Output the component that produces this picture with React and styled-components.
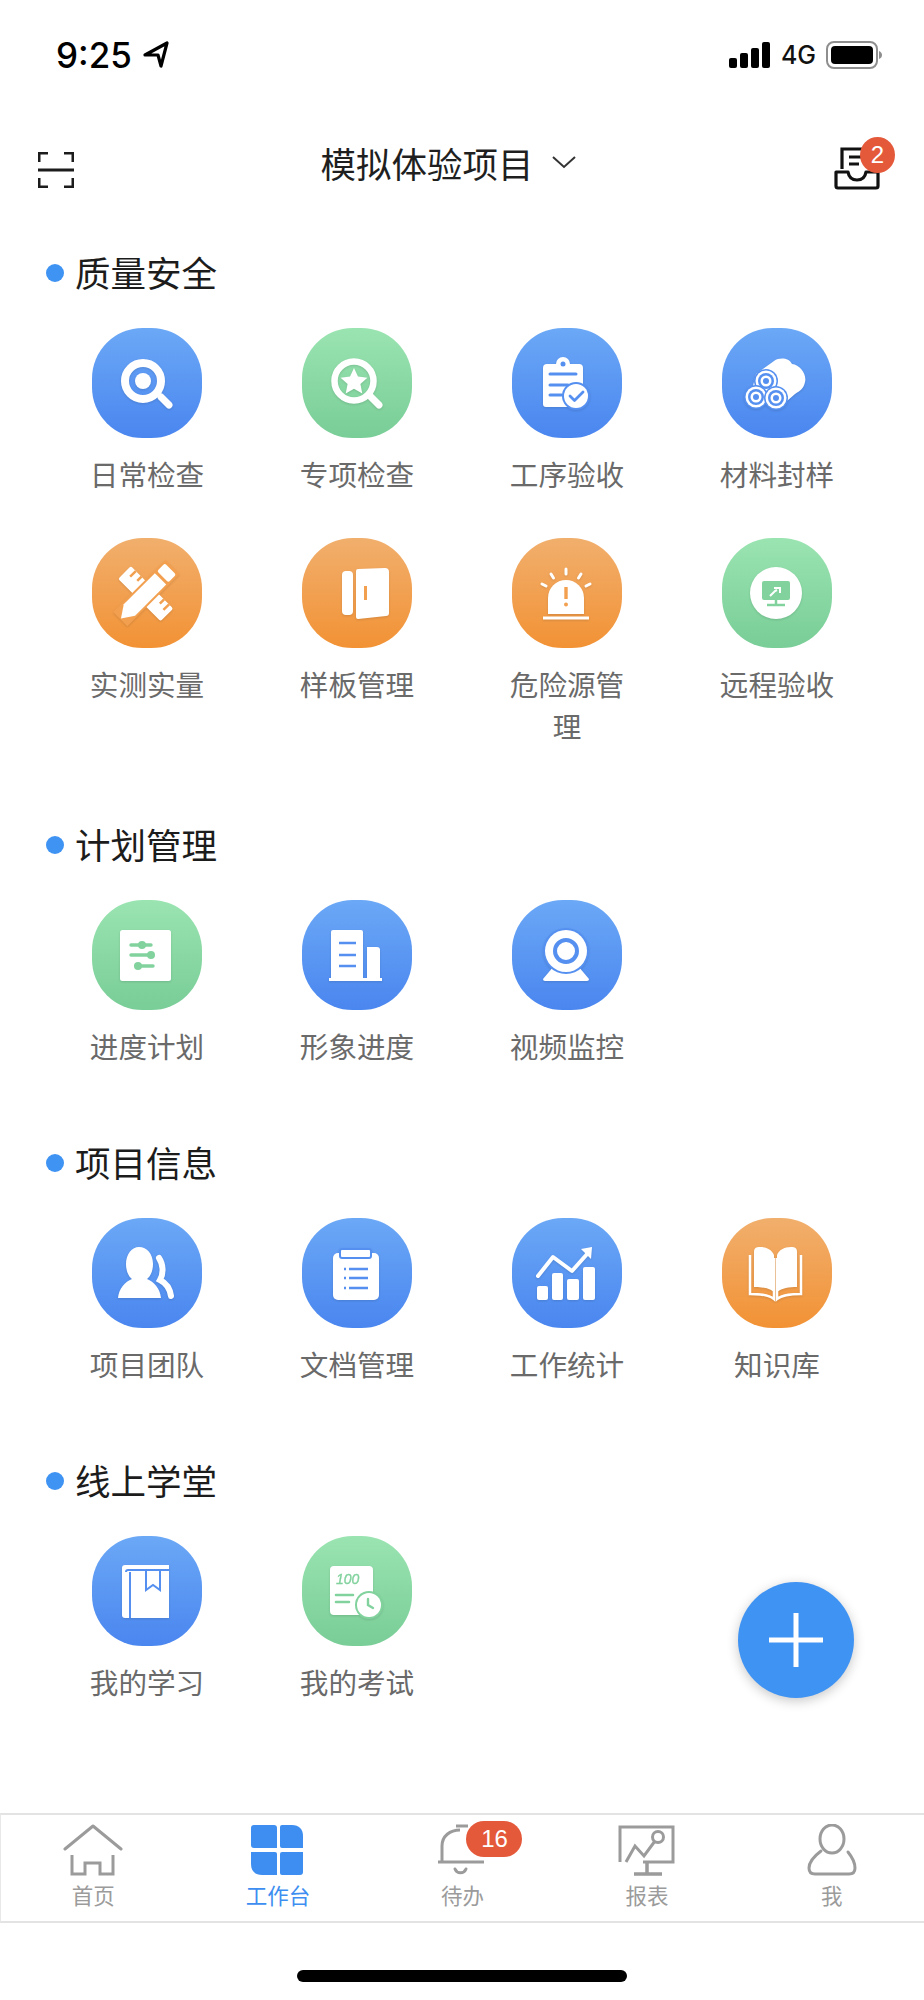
import React from "react";
import styled, { createGlobalStyle } from "styled-components";

const GlobalStyle = createGlobalStyle`
  html, body {
    margin: 0;
    padding: 0;
    background: #fff;
  }
  body {
    font-family: "Noto Sans CJK SC", "Noto Sans", sans-serif;
  }
`;

const BLUE = "#5590f0";
const GREEN = "#82d29e";
const ORANGE = "#f2a050";

const Page = styled.div`
  position: relative;
  width: 924px;
  height: 2000px;
  display: flex;
  flex-direction: column;
  overflow: hidden;
  background: #fff;
`;

const StatusBar = styled.div`
  height: 110px;
  box-sizing: border-box;
  padding: 36px 42px 0 56px;
  display: flex;
  justify-content: space-between;
  align-items: flex-start;
`;
const StatusLeft = styled.div`
  display: flex;
  align-items: center;
  gap: 11px;
  height: 38px;
`;
const StatusRight = styled.div`
  display: flex;
  align-items: center;
  gap: 10px;
  height: 38px;
`;
const Time = styled.span`
  font-family: "Inter", "Liberation Sans", sans-serif;
  font-size: 35px;
  font-weight: 500;
  color: #000;
`;
const Network = styled.span`
  font-family: "Inter", "Liberation Sans", sans-serif;
  font-size: 25px;
  font-weight: 500;
  color: #111;
`;

const Header = styled.div`
  height: 106px;
  box-sizing: border-box;
  padding: 0 29px 0 38px;
  display: flex;
  align-items: center;
  justify-content: space-between;
`;
const ScanButton = styled.div`
  margin-top: 14px;
  height: 36px;
`;
const ProjectPicker = styled.div`
  display: flex;
  align-items: center;
  gap: 18px;
  margin: -2px 0 0 -12px;
`;
const ProjectName = styled.span`
  font-size: 35.5px;
  color: #1f1f1f;
`;
const InboxWrap = styled.div`
  position: relative;
  width: 61px;
  height: 52px;
  margin-top: 20px;
  svg {
    display: block;
  }
`;
const InboxBadge = styled.span`
  position: absolute;
  top: -10px;
  right: 0;
  width: 35px;
  height: 36px;
  border-radius: 50%;
  background: #e5593b;
  color: #fff;
  font-family: "Liberation Sans", sans-serif;
  font-size: 24px;
  display: flex;
  align-items: center;
  justify-content: center;
`;

const Main = styled.div`
  flex: 1;
  padding-top: 34px;
`;
const Section = styled.section`
  margin-bottom: ${(props) => props.$after || 73}px;
`;
const SectionTitle = styled.div`
  height: 46px;
  padding-left: 46px;
  display: flex;
  align-items: center;
  gap: 11px;
  font-size: 35.5px;
  line-height: 42px;
  color: #1c1c1c;
  &::before {
    content: "";
    width: 18px;
    height: 18px;
    border-radius: 50%;
    background: #3f93f3;
  }
`;
const SectionText = styled.span`
  margin-top: -3px;
`;
const Grid = styled.div`
  margin-top: 32px;
  padding: 0 42px;
  display: grid;
  grid-template-columns: repeat(4, 210px);
  row-gap: 43px;
`;
const Cell = styled.div`
  display: flex;
  flex-direction: column;
  align-items: center;
`;
const Tile = styled.div`
  width: 110px;
  height: 110px;
  border-radius: 46%;
  background: ${(props) =>
    props.$tone === "green"
      ? "linear-gradient(180deg, #9ae4b1 0%, #79cd97 100%)"
      : props.$tone === "orange"
      ? "linear-gradient(180deg, #f1af6d 0%, #f29235 100%)"
      : "linear-gradient(180deg, #6ba8f6 0%, #4a86ef 100%)"};
  svg {
    display: block;
    filter: drop-shadow(0 1px 1px rgba(0, 0, 0, 0.12));
  }
`;
const Label = styled.div`
  margin-top: 15px;
  width: 120px;
  text-align: center;
  font-size: 28.6px;
  line-height: 42px;
  color: #6a6a6a;
`;

const Fab = styled.div`
  position: absolute;
  left: 738px;
  top: 1582px;
  width: 116px;
  height: 116px;
  border-radius: 50%;
  background: #3f93f3;
  box-shadow: 0 3px 12px rgba(0, 0, 0, 0.22);
  display: flex;
  align-items: center;
  justify-content: center;
`;

const TabBar = styled.div`
  height: 110px;
  box-sizing: border-box;
  border-top: 2px solid #e3e3e3;
  border-bottom: 2px solid #e3e3e3;
  border-left: 1px solid #e8e8e8;
  display: flex;
`;
const Tab = styled.div`
  flex: 1;
  display: flex;
  flex-direction: column;
  align-items: center;
  padding-top: 9px;
  svg {
    display: block;
  }
`;
const TabIconWrap = styled.div`
  position: relative;
  width: 60px;
  height: 52px;
`;
const TabBadge = styled.span`
  position: absolute;
  left: 34px;
  top: -3px;
  width: 56px;
  height: 36px;
  border-radius: 18px;
  background: #e5593b;
  color: #fff;
  font-family: "Liberation Sans", sans-serif;
  font-size: 24px;
  display: flex;
  align-items: center;
  justify-content: center;
`;
const TabLabel = styled.span`
  margin-top: 4px;
  font-size: 21.5px;
  line-height: 30px;
  color: ${(props) => (props.$active ? "#3d8ef0" : "#9b9b9b")};
`;
const HomeZone = styled.div`
  height: 77px;
  display: flex;
  justify-content: center;
  padding-top: 47px;
  box-sizing: border-box;
`;
const HomeBar = styled.div`
  width: 330px;
  height: 12px;
  border-radius: 6px;
  background: #000;
`;

const Glyph = ({ children }) => (
  <svg width="110" height="110" viewBox="0 0 110 110">
    {children}
  </svg>
);

const icons = {
  search: (
    <Glyph>
      <circle cx="51" cy="53" r="18" fill="none" stroke="#fff" strokeWidth="8" />
      <circle cx="51" cy="53" r="8" fill="#fff" />
      <path d="M69 69l8 8" stroke="#fff" strokeWidth="7" strokeLinecap="round" />
    </Glyph>
  ),
  star: (
    <Glyph>
      <circle cx="52" cy="53" r="19.5" fill="none" stroke="#fff" strokeWidth="6.5" />
      <path d="M52 40l4 8.6 9.4 1.1-7 6.4 1.9 9.3L52 60.7l-8.3 4.7 1.9-9.3-7-6.4 9.4-1.1z" fill="#fff" />
      <path d="M69 69l8 8" stroke="#fff" strokeWidth="7" strokeLinecap="round" />
    </Glyph>
  ),
  clipboard: (
    <Glyph>
      <path d="M35 36h9a7 7 0 0 1 14 0h9a4 4 0 0 1 4 4v36a3 3 0 0 1-3 3H34a3 3 0 0 1-3-3V40a4 4 0 0 1 4-4z" fill="#fff" />
      <circle cx="51" cy="36" r="2.5" fill={BLUE} />
      <path d="M38 46h26M38 57h18M38 67h12" stroke={BLUE} strokeWidth="3" strokeLinecap="round" />
      <circle cx="64" cy="68" r="14" fill={BLUE} />
      <circle cx="64" cy="68" r="12" fill="#fff" />
      <path d="M58 68l4.5 4.5L71 64" fill="none" stroke={BLUE} strokeWidth="2.8" strokeLinecap="round" strokeLinejoin="round" />
    </Glyph>
  ),
  pipes: (
    <Glyph>
      <path d="M34 46L52 33c6-4 15-3 18 3 8 1 15 10 13 18-1 6-5 9-10 12L58 79 30 62z" fill="#fff" />
      {[[44, 53], [34, 69], [54, 70]].map(([x, y]) => (
        <g key={x}>
          <circle cx={x} cy={y} r="12" fill={BLUE} />
          <circle cx={x} cy={y} r="10.5" fill="#fff" />
          <circle cx={x} cy={y} r="8" fill={BLUE} />
          <circle cx={x} cy={y} r="5.5" fill="#fff" />
          <circle cx={x} cy={y} r="3" fill={BLUE} />
        </g>
      ))}
    </Glyph>
  ),
  tools: (
    <Glyph>
      <g transform="rotate(45 53 55)">
        <rect x="24" y="46" width="60" height="18" rx="2" fill="#fff" />
        <path d="M31 46v8M39 46v6M71 46v6M78 46v8" stroke={ORANGE} strokeWidth="2.5" />
      </g>
      <g transform="rotate(-45 53 55)">
        <rect x="17" y="46" width="74" height="20" fill={ORANGE} />
        <path d="M30 48h44v16H30L18 56z" fill="#fff" />
        <rect x="77" y="48" width="11" height="16" rx="2" fill="#fff" />
      </g>
    </Glyph>
  ),
  door: (
    <Glyph>
      <rect x="40" y="33" width="11" height="44" rx="4" fill="#fff" />
      <path d="M56 31l27-1a4 4 0 0 1 4 4v41a3 3 0 0 1-3 3l-28 3a2 2 0 0 1-2-2V33a2 2 0 0 1 2-2z" fill="#fff" />
      <rect x="62" y="48" width="3" height="14" fill={ORANGE} />
    </Glyph>
  ),
  alarm: (
    <Glyph>
      <path d="M36 76V60a18 18 0 0 1 36 0v16z" fill="#fff" />
      <path d="M54 49v12" stroke={ORANGE} strokeWidth="3.4" />
      <circle cx="54" cy="66.5" r="2" fill={ORANGE} />
      <path d="M31 80h46" stroke="#fff" strokeWidth="3" />
      <path d="M54 31v5M39 36l2.5 4M69 36l-2.5 4M30 46l4 2M78 46l-4 2" stroke="#fff" strokeWidth="3" strokeLinecap="round" />
    </Glyph>
  ),
  remote: (
    <Glyph>
      <circle cx="54" cy="55" r="26" fill="#fff" />
      <rect x="40" y="43" width="28" height="19" rx="2" fill={GREEN} />
      <path d="M54 62v4M45 67h18" stroke={GREEN} strokeWidth="2.5" />
      <path d="M48 58l5-5 2-1M52 50h6v5" fill="none" stroke="#fff" strokeWidth="2" />
    </Glyph>
  ),
  plan: (
    <Glyph>
      <rect x="28" y="30" width="51" height="51" rx="2.5" fill="#fff" />
      <path d="M39 45h20M39 55h20M44 66h17" stroke={GREEN} strokeWidth="3.4" strokeLinecap="round" />
      <circle cx="50" cy="45" r="4" fill={GREEN} />
      <circle cx="59" cy="55" r="4" fill={GREEN} />
      <circle cx="46" cy="66" r="4" fill={GREEN} />
    </Glyph>
  ),
  building: (
    <Glyph>
      <path d="M31 30h28a2 2 0 0 1 2 2v47H29V32a2 2 0 0 1 2-2z" fill="#fff" />
      <path d="M65 47h10a3 3 0 0 1 3 3v29H65z" fill="#fff" />
      <rect x="27" y="78" width="53" height="3" fill="#fff" />
      <path d="M37 43h17M37 55h17M37 66h17" stroke={BLUE} strokeWidth="2.4" />
    </Glyph>
  ),
  camera: (
    <Glyph>
      <path d="M42 66h24l11 13a2 2 0 0 1-2 2H33a2 2 0 0 1-2-2z" fill="#fff" />
      <circle cx="54" cy="51" r="23" fill={BLUE} />
      <circle cx="54" cy="51" r="21" fill="#fff" />
      <circle cx="54" cy="51" r="11" fill="none" stroke={BLUE} strokeWidth="4" />
    </Glyph>
  ),
  team: (
    <Glyph>
      <path d="M47 29c8 0 14 7 14 17 0 6-2 12-6 15 7 3 13 9 14 19H26c1-10 7-16 14-19-4-3-6-9-6-15 0-10 6-17 13-17z" fill="#fff" />
      <path d="M67 40c4 6 5 15 1 22 6 3 10 9 11 16" fill="none" stroke="#fff" strokeWidth="6" strokeLinecap="round" />
    </Glyph>
  ),
  document: (
    <Glyph>
      <rect x="31" y="35" width="46" height="47" rx="5" fill="#fff" />
      <rect x="38" y="31" width="31" height="9" rx="2" fill="#fff" stroke={BLUE} strokeWidth="2" />
      <path d="M47 51h19M47 60h19M47 70h19" stroke={BLUE} strokeWidth="2.4" />
      <path d="M42 51h2M42 60h2M42 70h2" stroke={BLUE} strokeWidth="2.4" />
    </Glyph>
  ),
  stats: (
    <Glyph>
      <rect x="25" y="68" width="11" height="14" rx="2" fill="#fff" />
      <rect x="40" y="55" width="11" height="27" rx="2" fill="#fff" />
      <rect x="55" y="61" width="12" height="21" rx="2" fill="#fff" />
      <rect x="71" y="49" width="12" height="33" rx="2" fill="#fff" />
      <path d="M26 58l15-19 19 14 16-18" fill="none" stroke="#fff" strokeWidth="4" strokeLinecap="round" strokeLinejoin="round" />
      <path d="M69 31l11-2-1 12z" fill="#fff" />
    </Glyph>
  ),
  book: (
    <Glyph>
      <path d="M28 37v39c8 0 18 0 24 5V40" fill="none" stroke="#fff" strokeWidth="2.5" />
      <path d="M79 37v39c-8 0-18 0-24 5V40" fill="none" stroke="#fff" strokeWidth="2.5" />
      <path d="M32 34c0-4 2-5 6-5 7 0 12 3 14 8v37c-5-4-12-5-20-5z" fill="#fff" />
      <path d="M75 34c0-4-2-5-6-5-7 0-12 3-14 8v37c5-4 12-5 20-5z" fill="#fff" />
    </Glyph>
  ),
  study: (
    <Glyph>
      <path d="M33 29h44v53H33a3 3 0 0 1-3-3V32a3 3 0 0 1 3-3z" fill="#fff" />
      <path d="M77 34H36a2 2 0 0 0-2 2M38 36v46" fill="none" stroke={BLUE} strokeWidth="2" />
      <path d="M54 35v19l7-5 7 5V35" fill="none" stroke={BLUE} strokeWidth="2" />
    </Glyph>
  ),
  exam: (
    <Glyph>
      <rect x="28" y="30" width="43" height="49" rx="4" fill="#fff" />
      <text x="34" y="48" fontFamily="Liberation Sans, sans-serif" fontSize="14" fontStyle="italic" fill={GREEN} stroke={GREEN} strokeWidth="0.3">100</text>
      <path d="M34 59h17M34 66h13" stroke={GREEN} strokeWidth="2.6" strokeLinecap="round" />
      <circle cx="67" cy="69" r="14" fill={GREEN} />
      <circle cx="67" cy="69" r="12" fill="#fff" />
      <path d="M66 63v6l5 3" fill="none" stroke={GREEN} strokeWidth="2.4" strokeLinecap="round" />
    </Glyph>
  ),
};

const sections = [
  {
    title: "质量安全",
    after: 75,
    items: [
      ["日常检查", "search", "blue"],
      ["专项检查", "star", "green"],
      ["工序验收", "clipboard", "blue"],
      ["材料封样", "pipes", "blue"],
      ["实测实量", "tools", "orange"],
      ["样板管理", "door", "orange"],
      ["危险源管理", "alarm", "orange"],
      ["远程验收", "remote", "green"],
    ],
  },
  {
    title: "计划管理",
    items: [
      ["进度计划", "plan", "green"],
      ["形象进度", "building", "blue"],
      ["视频监控", "camera", "blue"],
    ],
  },
  {
    title: "项目信息",
    items: [
      ["项目团队", "team", "blue"],
      ["文档管理", "document", "blue"],
      ["工作统计", "stats", "blue"],
      ["知识库", "book", "orange"],
    ],
  },
  {
    title: "线上学堂",
    items: [
      ["我的学习", "study", "blue"],
      ["我的考试", "exam", "green"],
    ],
  },
];

const GRAY = "#9b9b9b";

const TabSvg = ({ children }) => (
  <svg width="60" height="52" viewBox="0 0 60 52" fill="none" stroke={GRAY} strokeWidth="3">
    {children}
  </svg>
);

const tabs = [
  {
    label: "首页",
    icon: (
      <TabSvg>
        <path d="M2 25L30 2l28 23" strokeLinecap="round" strokeLinejoin="round" />
        <path d="M9 31v19h13V39h15v11h13V31" />
      </TabSvg>
    ),
  },
  {
    label: "工作台",
    active: true,
    icon: (
      <svg width="60" height="52" viewBox="0 0 60 52" fill="#3d8ef0">
        <path d="M6 1h20a3 3 0 0 1 3 3v20H6a3 3 0 0 1-3-3V4a3 3 0 0 1 3-3z" />
        <path d="M34 1h10c7 0 11 4 11 11v12H34a2 2 0 0 1-2-2V3a2 2 0 0 1 2-2z" />
        <path d="M3 28h24a2 2 0 0 1 2 2v21H14C7 51 3 47 3 40z" />
        <path d="M34 28h21v20a3 3 0 0 1-3 3H34a2 2 0 0 1-2-2V30a2 2 0 0 1 2-2z" />
      </svg>
    ),
  },
  {
    label: "待办",
    badge: "16",
    icon: (
      <TabSvg>
        <path d="M10 37V22C10 12 18 6 28 6" />
        <path d="M24 2h12" />
        <path d="M6 38h46" />
        <path d="M23 45c2 5 9 5 11 0" strokeLinecap="round" />
      </TabSvg>
    ),
  },
  {
    label: "报表",
    icon: (
      <TabSvg>
        <path d="M3 38V3h53v35H26" />
        <path d="M9 38l9-16 9 10 11-15" />
        <circle cx="41" cy="13" r="5.5" />
        <path d="M30 39v10M17 50h28" strokeWidth="3.5" />
      </TabSvg>
    ),
  },
  {
    label: "我",
    icon: (
      <TabSvg>
        <ellipse cx="30" cy="15" rx="12" ry="14" />
        <path d="M19 27C11 33 7 38 7 44c0 4 2 6 6 6h34c4 0 6-2 6-6 0-6-3-11-7-16" strokeLinecap="round" />
      </TabSvg>
    ),
  },
];

function App() {
  return (
    <Page>
      <GlobalStyle />
      <StatusBar>
        <StatusLeft>
          <Time>9:25</Time>
          <svg width="26" height="28" viewBox="0 0 26 28" fill="none" stroke="#000" strokeWidth="3.2" strokeLinejoin="round">
            <path d="M2 14L24 2l-6 23-3-11z" />
          </svg>
        </StatusLeft>
        <StatusRight>
          <svg width="42" height="26" viewBox="0 0 42 26" fill="#000">
            <rect x="0" y="16" width="8" height="10" rx="2" />
            <rect x="11" y="11" width="8" height="15" rx="2" />
            <rect x="22" y="6" width="8" height="20" rx="2" />
            <rect x="33" y="0" width="8" height="26" rx="2" />
          </svg>
          <Network>4G</Network>
          <svg width="56" height="28" viewBox="0 0 56 28">
            <rect x="1" y="1" width="50" height="26" rx="7" fill="none" stroke="#8e8e8e" strokeWidth="2" />
            <rect x="5" y="5" width="42" height="18" rx="4" fill="#000" />
            <path d="M53 10c2 1 3 2 3 4s-1 3-3 4z" fill="#8e8e8e" />
          </svg>
        </StatusRight>
      </StatusBar>

      <Header>
        <ScanButton>
          <svg width="36" height="36" viewBox="0 0 36 36" fill="none" stroke="#1c1c1c" strokeWidth="3">
            <path d="M1 10V1h9M26 1h9v9M1 26v9h9M26 35h9v-9M0 18h36" />
          </svg>
        </ScanButton>
        <ProjectPicker>
          <ProjectName>模拟体验项目</ProjectName>
          <svg width="24" height="13" viewBox="0 0 24 13" fill="none" stroke="#333" strokeWidth="2">
            <path d="M1 1l11 10L23 1" />
          </svg>
        </ProjectPicker>
        <InboxWrap>
          <svg width="46" height="43" viewBox="0 0 46 43" fill="none" stroke="#111" strokeWidth="3.2">
            <path d="M8 22V2h28v20M15 10h14M15 17h10" />
            <path d="M2 25h12c1 6 5 8 9 8s8-2 9-8h12v14a2 2 0 0 1-2 2H4a2 2 0 0 1-2-2z" strokeLinejoin="round" />
          </svg>
          <InboxBadge>2</InboxBadge>
        </InboxWrap>
      </Header>

      <Main>
        {sections.map((section) => (
          <Section key={section.title} $after={section.after}>
            <SectionTitle>
              <SectionText>{section.title}</SectionText>
            </SectionTitle>
            <Grid>
              {section.items.map(([label, icon, tone]) => (
                <Cell key={label}>
                  <Tile $tone={tone}>{icons[icon]}</Tile>
                  <Label>{label}</Label>
                </Cell>
              ))}
            </Grid>
          </Section>
        ))}
      </Main>

      <Fab>
        <svg width="54" height="54" viewBox="0 0 54 54" stroke="#fff" strokeWidth="5">
          <path d="M27 0v54M0 27h54" />
        </svg>
      </Fab>

      <TabBar>
        {tabs.map((tab) => (
          <Tab key={tab.label}>
            <TabIconWrap>
              {tab.icon}
              {tab.badge && <TabBadge>{tab.badge}</TabBadge>}
            </TabIconWrap>
            <TabLabel $active={tab.active}>{tab.label}</TabLabel>
          </Tab>
        ))}
      </TabBar>
      <HomeZone>
        <HomeBar />
      </HomeZone>
    </Page>
  );
}

export default App;
